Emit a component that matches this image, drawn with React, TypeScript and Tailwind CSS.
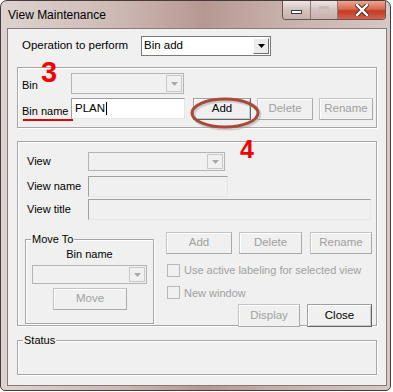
import React from 'react';

const font = { fontFamily: '"Liberation Sans", Arial, sans-serif' };

const Arrow = ({ disabled }: { disabled?: boolean }) => (
  <svg width="7" height="4" viewBox="0 0 7 4">
    <path d="M0 0 H7 L3.5 4 Z" fill={disabled ? '#a8a8a8' : '#000'} />
  </svg>
);

const Combo = ({ w, h, value, disabled }: { w: string; h: string; value?: string; disabled?: boolean }) => (
  <div
    className={`${w} ${h} shrink-0 flex items-stretch border ${
      disabled ? 'border-[#b4b4b4] bg-[#f0f0f0]' : 'border-[#7a7a7a] bg-white'
    }`}
  >
    <div className="flex-1 pl-[2px] leading-[17px] text-[11.5px]">{value}</div>
    <div
      className={`m-[1px] w-[16px] flex items-center justify-center border ${
        disabled
          ? 'border-[#c8c8c8] bg-[#f0f0f0]'
          : 'border-t-white border-l-white border-b-[#6d6d6d] border-r-[#6d6d6d] bg-[#ececec]'
      }`}
    >
      <Arrow disabled={disabled} />
    </div>
  </div>
);

const Field = ({ w, children, disabled }: { w: string; children?: React.ReactNode; disabled?: boolean }) => (
  <div
    className={`${w} h-[21px] shrink-0 border border-t-[#a0a0a0] border-l-[#a0a0a0] border-b-[#e6e6e6] border-r-[#e6e6e6] ${
      disabled ? 'bg-[#f0f0f0]' : 'bg-white'
    } flex items-center pl-[3px] text-[11.5px]`}
  >
    {children}
  </div>
);

const Btn = ({ w, h = 'h-[22px]', label, disabled, className = '' }: { w: string; h?: string; label: string; disabled?: boolean; className?: string }) => (
  <div
    className={`${w} ${h} ${className} shrink-0 flex items-center justify-center border bg-[#f0f0f0] text-[11.5px] ${
      disabled
        ? 'border-[#c4c4c4] border-b-[#a9a9a9] border-r-[#a9a9a9] text-[#a0a0a0] shadow-[inset_1px_1px_0_#ffffff]'
        : 'border-[#a0a0a0] border-b-[#646464] border-r-[#646464] text-black shadow-[inset_1px_1px_0_#ffffff,inset_-1px_-1px_0_#c8c8c8]'
    }`}
  >
    {label}
  </div>
);

const Check = ({ label }: { label: string }) => (
  <div className="flex items-center">
    <div className="w-[13px] h-[13px] shrink-0 border border-[#b8b8b8] bg-[#f0f0f0]" />
    <span className="ml-[4px] text-[11px] text-[#a0a0a0]">{label}</span>
  </div>
);

const groupBox = 'border border-[#a6a6a6] shadow-[1px_1px_0_#ffffff,inset_1px_1px_0_#ffffff]';

export default function App() {
  return (
    <div className="relative w-[393px] h-[392px] bg-white overflow-hidden whitespace-nowrap" style={font}>
      <div className="w-[391px] h-[391px] rounded-t-[7px] rounded-b-[5px] border border-[#4a3a37] bg-[linear-gradient(90deg,#ddd3d0_0%,#cdb9b4_30%,#b69893_52%,#c7b0ab_72%,#d6c8c4_100%)] flex flex-col">
        {/* title bar */}
        <div className="h-[27px] flex items-start">
          <div className="pl-[7px] pt-[7px] text-[12px] text-black leading-[14px]">View Maintenance</div>
          <div className="ml-auto mr-[4px] flex h-[19px] rounded-b-[4px] border border-t-0 border-[#6a5552] overflow-hidden">
            <div className="w-[28px] flex items-center justify-center bg-[linear-gradient(180deg,#eee6e4,#d2c2be_50%,#c6b2ad)] border-r border-[#8c7773]">
              <div className="w-[11px] h-[4px] mt-[4px] bg-white border border-[#3c3c3c]" />
            </div>
            <div className="w-[27px] flex items-center justify-center bg-[linear-gradient(180deg,#eee6e4,#d2c2be_50%,#c6b2ad)] border-r border-[#8c7773]">
              <div className="w-[10px] h-[8px] border border-[#c9bcb9] shadow-[inset_0_2px_0_#c9bcb9]" />
            </div>
            <div className="w-[47px] flex items-center justify-center bg-[linear-gradient(180deg,#e9a796,#d66a50_45%,#c13c22_55%,#d4604a)]">
              <svg width="14" height="12" viewBox="0 0 14 12">
                <path d="M2 1 L12 11 M12 1 L2 11" stroke="#4a2a24" strokeWidth="4.2" strokeLinecap="square" />
                <path d="M2 1 L12 11 M12 1 L2 11" stroke="#ffffff" strokeWidth="2.4" strokeLinecap="square" />
              </svg>
            </div>
          </div>
        </div>

        {/* client area */}
        <div className="ml-[6px] w-[380px] h-[358px] border border-[#8a7a77] bg-[#f0f0f0] text-[11px] text-black">
          <div className="mt-[7px] pl-[14px] flex items-center h-[20px]">
            <div className="w-[119px] text-[11.5px]">Operation to perform</div>
            <Combo w="w-[130px]" h="h-[20px]" value="Bin add" />
          </div>

          {/* Bin group */}
          <div className={`mt-[11px] ml-[9px] w-[360px] h-[61px] ${groupBox}`}>
            <div className="mt-[5px] pl-[4px] flex items-center">
              <div className="w-[49px] pt-[4px]">Bin</div>
              <Combo w="w-[113px]" h="h-[21px]" disabled />
            </div>
            <div className="mt-[4px] pl-[4px] flex items-start">
              <div className="w-[49px] pt-[5px]">Bin name</div>
              <Field w="w-[114px]">
                PLAN<span className="ml-[1px] inline-block w-[1px] h-[13px] bg-black" />
              </Field>
              <Btn w="w-[58px]" label="Add" className="ml-[8px]" />
              <Btn w="w-[56px]" label="Delete" disabled className="ml-[6px]" />
              <Btn w="w-[54px]" label="Rename" disabled className="ml-[6px]" />
            </div>
          </div>

          {/* View group */}
          <div className={`mt-[13px] ml-[9px] w-[360px] h-[185px] ${groupBox}`}>
            <div className="mt-[10px] pl-[9px] flex items-center">
              <div className="w-[61px]">View</div>
              <Combo w="w-[137px]" h="h-[19px]" disabled />
            </div>
            <div className="mt-[5px] pl-[9px] flex items-center">
              <div className="w-[61px]">View name</div>
              <Field w="w-[140px]" disabled />
            </div>
            <div className="mt-[2px] pl-[9px] flex items-center">
              <div className="w-[61px]">View title</div>
              <Field w="w-[283px]" disabled />
            </div>

            <div className="mt-[12px] flex items-start">
              <div className={`relative shrink-0 ml-[7px] mt-[7px] w-[129px] h-[85px] ${groupBox}`}>
                <div className="absolute left-[5px] top-[-8px] px-[1px] bg-[#f0f0f0] leading-[14px]">Move To</div>
                <div className="mt-[7px] text-center leading-[14px]">Bin name</div>
                <div className="mt-[4px] ml-[6px]">
                  <Combo w="w-[115px]" h="h-[19px]" disabled />
                </div>
                <div className="mt-[4px] ml-[27px]">
                  <Btn w="w-[74px]" label="Move" disabled />
                </div>
              </div>

              <div className="ml-[12px] flex flex-col">
                <div className="flex">
                  <Btn w="w-[66px]" label="Add" disabled />
                  <Btn w="w-[63px]" label="Delete" disabled className="ml-[7px]" />
                  <Btn w="w-[62px]" label="Rename" disabled className="ml-[8px]" />
                </div>
                <div className="mt-[8px] ml-[1px]">
                  <Check label="Use active labeling for selected view" />
                </div>
                <div className="mt-[6px] ml-[1px]">
                  <Check label="New window" />
                </div>
                <div className="mt-[3px] ml-[72px] flex">
                  <Btn w="w-[62px]" h="h-[23px]" label="Display" disabled />
                  <Btn w="w-[65px]" h="h-[23px]" label="Close" className="ml-[7px]" />
                </div>
              </div>
            </div>
          </div>

          {/* Status group */}
          <div className={`relative mt-[14px] ml-[9px] w-[360px] h-[35px] ${groupBox}`}>
            <div className="absolute left-[5px] top-[-8px] px-[1px] bg-[#f0f0f0] leading-[14px]">Status</div>
          </div>
        </div>
      </div>

      {/* annotations */}
      <div className="absolute left-[41px] top-[58px] text-[29px] font-bold text-[#f00000] leading-none">3</div>
      <div className="absolute left-[240px] top-[137px] text-[25px] font-bold text-[#f00000] leading-none">4</div>
      <div className="absolute left-[23px] top-[119px] w-[50px] h-[2px] bg-[#e00000]" />
      <svg className="absolute left-[187px] top-[95px]" width="78" height="38" viewBox="0 0 78 38">
        <ellipse cx="39.5" cy="19.5" rx="33" ry="14" fill="none" stroke="#8a8a8a" strokeOpacity="0.35" strokeWidth="4" />
        <ellipse cx="38" cy="18" rx="33" ry="14" fill="none" stroke="#a9493a" strokeWidth="3" />
      </svg>
    </div>
  );
}
